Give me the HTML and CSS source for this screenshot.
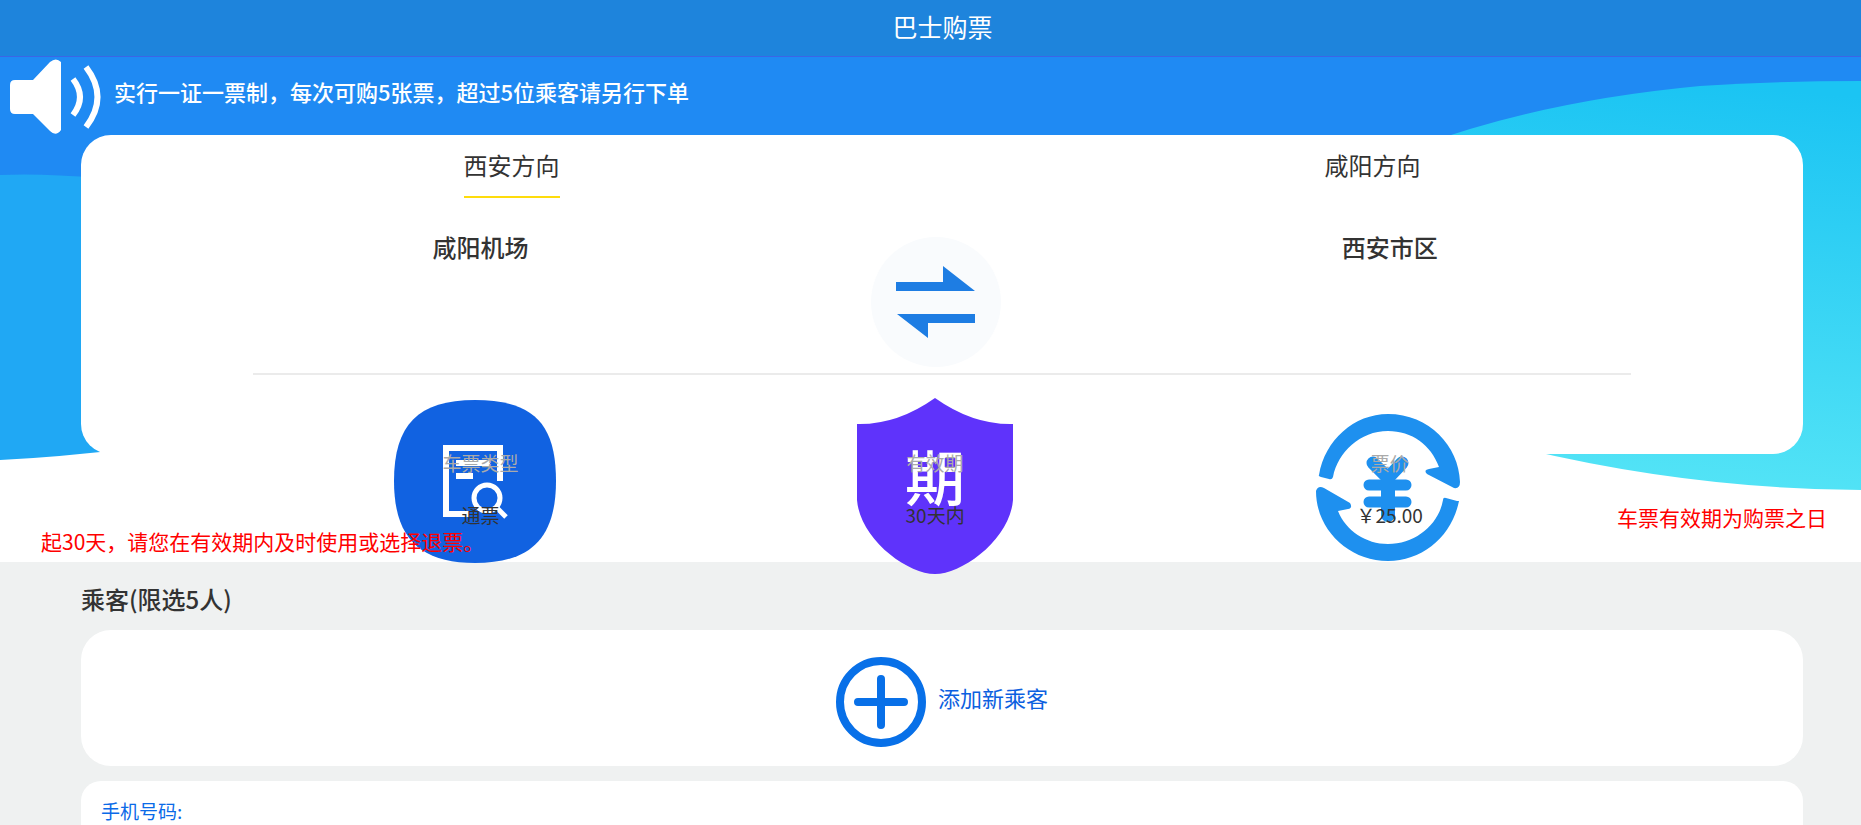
FILE: index.html
```html
<!DOCTYPE html>
<html lang="zh-CN">

<head>
    <meta charset="UTF-8">
    <title>巴士购票</title>
    <link rel="stylesheet" href="styles.css">
</head>

<body>
    <header class="header">
        <h1>巴士购票</h1>
    </header>

    <div class="hero">
        <svg class="hero-bg" viewBox="0 0 1861 505" preserveAspectRatio="none">
            <defs>
                <linearGradient id="cyan" x1="0.6" y1="0" x2="0.5" y2="1">
                    <stop offset="0" stop-color="#1bc4f3" />
                    <stop offset="1" stop-color="#54e4f6" />
                </linearGradient>
            </defs>
            <path fill="#1f8af3" d="M0 0H1861V300H0Z" />
            <path fill="#20a8f4" d="M0 118Q40 116 100 121L400 200V340Q200 392 0 403Z" />
            <path fill="url(#cyan)" d="M1416 90Q1540 44 1700 29Q1780 24 1861 24V433Q1690 432 1520 391L1420 350Z" />
        </svg>

        <div class="notice">
            <svg class="horn" viewBox="0 0 96 78">
                <path fill="#fff" d="M5 23H23L40 5Q46 0 51 5V73Q46 80 40 74L23 57H5Q0 57 0 52V28Q0 23 5 23Z" />
                <path fill="none" stroke="#fff" stroke-width="6" d="M63 22Q77 40 63 58M76 10Q99 40 76 70" />
            </svg>
            <span>实行一证一票制，每次可购5张票，超过5位乘客请另行下单</span>
        </div>

        <div class="card trip">
            <div class="tabs">
                <button type="button" class="tab active">西安方向</button>
                <button type="button" class="tab">咸阳方向</button>
            </div>
            <div class="row cities">
                <div class="col">咸阳机场</div>
                <div class="col">
                    <button type="button" class="swap" aria-label="切换">
                        <svg viewBox="0 0 132 132">
                            <circle cx="67" cy="66" r="65" fill="#f9fbfd" />
                            <path fill="#1e7de3" d="M27 46H74V30L106 55H27ZM106 78V87H59V102L28 78Z" />
                        </svg>
                    </button>
                </div>
                <div class="col">西安市区</div>
            </div>
            <div class="row tickets">
                <div class="col">
                    <svg class="icon" viewBox="0 0 180 180">
                        <path fill="#1162e1" d="M84 4C143 4 165 28 165 85C165 143 139 167 84 167C30 167 3 143 3 85C3 29 27 4 84 4Z" />
                        <path fill="none" stroke="#fff" stroke-width="6" d="M109 85V52H55V118H78M65 67H99M65 80H82" />
                        <circle cx="96" cy="102" r="13" fill="none" stroke="#fff" stroke-width="5" />
                        <path stroke="#fff" stroke-width="5" d="M105 111L115 121" />
                    </svg>
                    <span class="name">车票类型</span>
                    <span class="value">通票</span>
                </div>
                <div class="col">
                    <svg class="icon" viewBox="0 0 180 180">
                        <path fill="#5f33fb" d="M90 2Q128 29 168 28V104C165 143 118 178 90 178C62 178 15 143 12 104V28Q52 29 90 2Z" />
                        <text class="shield-text" x="90" y="105" text-anchor="middle">期</text>
                    </svg>
                    <span class="name">有效期</span>
                    <span class="value">30天内</span>
                </div>
                <div class="col">
                    <svg class="icon" viewBox="0 0 180 180">
                        <g fill="#1e90ef">
                            <path d="M19 79C25 44 54 18 88 18C129 18 159 50 160 86Q160 93 154 92L127 78Q123 74 129 73L139 71C131 49 112 35 88 35C60 35 38 56 33 81Q32 84 29 83L21 81Q18 80 19 79Z" />
                            <path d="M159 105C152 140 123 165 88 165C49 165 16 134 16 95Q18 89 24 92L50 107Q53 112 48 113L38 115C46 135 66 148 88 148C116 148 139 128 143 104Q143 101 146 102L157 105Z" />
                        </g>
                        <g stroke="#1e90ef" stroke-linecap="round" fill="none">
                            <path stroke-width="13" d="M73 67L88 82L102 67" />
                            <path stroke-width="11" d="M69 89H106M69 106H106" />
                            <path stroke-width="14" d="M88 82V119" />
                        </g>
                    </svg>
                    <span class="name">票价</span>
                    <span class="value">￥25.00</span>
                </div>
            </div>
        </div>

        <p class="tip">车票有效期为购票之日起30天，请您在有效期内及时使用或选择退票。</p>
    </div>

    <h2 class="title">乘客(限选5人)</h2>
    <div class="card passenger">
        <button type="button" class="add">
            <svg viewBox="0 0 90 90">
                <circle cx="45" cy="45" r="41" fill="none" stroke="#0870e8" stroke-width="8" />
                <path stroke="#0870e8" stroke-width="8" stroke-linecap="round" d="M22 45H68M45 22V68" />
            </svg>
            <span>添加新乘客</span>
        </button>
    </div>
    <div class="card phone">
        <label for="phone">手机号码:</label>
        <input type="tel" id="phone">
    </div>
</body>

</html>
```

FILE: styles.css
```css
* {
    box-sizing: border-box;
}

body {
    margin: 0;
    background: #eff1f1;
    color: #333;
    font-family: "Noto Sans CJK SC", sans-serif;
    font-size: 19px;
    line-height: 24px;
}

button {
    padding: 0;
    border: none;
    background: none;
    color: inherit;
    font: inherit;
    cursor: pointer;
}

svg {
    display: block;
}

.header {
    height: 57px;
    padding-left: 24px;
    background: #1e84dc;
    border-bottom: 1px solid #3b66e6;
    color: #fff;
    text-align: center;
}

.header h1 {
    margin: 0;
    font-size: 25px;
    font-weight: 400;
    line-height: 52px;
}

.hero {
    position: relative;
    z-index: 0;
    padding-bottom: 9px;
    background: #fff;
}

.hero-bg {
    position: absolute;
    z-index: -1;
    width: 100%;
    height: 100%;
}

.notice {
    display: flex;
    height: 78px;
    padding-left: 10px;
    gap: 8px;
    color: #fff;
    font-size: 22px;
    font-weight: 500;
    line-height: 68px;
}

.horn {
    width: 96px;
    height: 78px;
}

.card {
    margin: 0 58px 0 81px;
    border-radius: 30px;
    background: #fff;
}

/* the ticket icons hang out below the card */
.trip {
    height: 319px;
}

.tabs {
    display: flex;
    justify-content: space-around;
    font-size: 24px;
}

.tabs .tab {
    height: 63px;
    border-bottom: 2px solid transparent;
    line-height: 24px;
    padding-bottom: 2px;
}

.tabs .active {
    border-bottom-color: #fedc0c;
}

.row {
    display: flex;
    width: 80%;
    margin: 0 auto;
    text-align: center;
}

.col {
    position: relative;
    width: 33%;
}

.cities {
    height: 177px;
    padding-top: 37px;
    border-bottom: 2px solid #ebebeb;
    font-size: 24px;
    font-weight: 500;
}

.swap {
    width: 132px;
    margin-top: 1px;
}

.tickets {
    padding-top: 76px;
}

.icon {
    position: absolute;
    top: -55px;
    left: calc(50% - 90px);
    width: 180px;
    height: 180px;
}

.shield-text {
    fill: #fff;
    font-size: 60px;
    font-weight: 500;
}

.name,
.value {
    position: relative;
    display: block;
}

.name {
    margin-bottom: 28px;
    color: #aaa;
}

.tip {
    position: relative;
    margin: 51px 30px 0 41px;
    color: red;
    font-size: 21px;
    text-indent: calc(100% - 214px);
}

.title {
    margin: 25px 0 19px 81px;
    font-size: 24px;
    font-weight: 500;
    line-height: 24px;
}

.passenger {
    padding: 27px 0 19px;
    margin-bottom: 15px;
}

.add {
    display: flex;
    margin: 0 auto;
    gap: 12px;
    color: #0c60e0;
    font-size: 22px;
    line-height: 80px;
}

.add svg {
    width: 90px;
}

.phone {
    display: flex;
    padding: 18px 20px 2px;
    border-radius: 20px 20px 0 0;
    color: #0a6ae8;
}

.phone input {
    flex: 1;
    height: 24px;
    border: none;
    outline: none;
    background: none;
    font-size: 19px;
}
```
